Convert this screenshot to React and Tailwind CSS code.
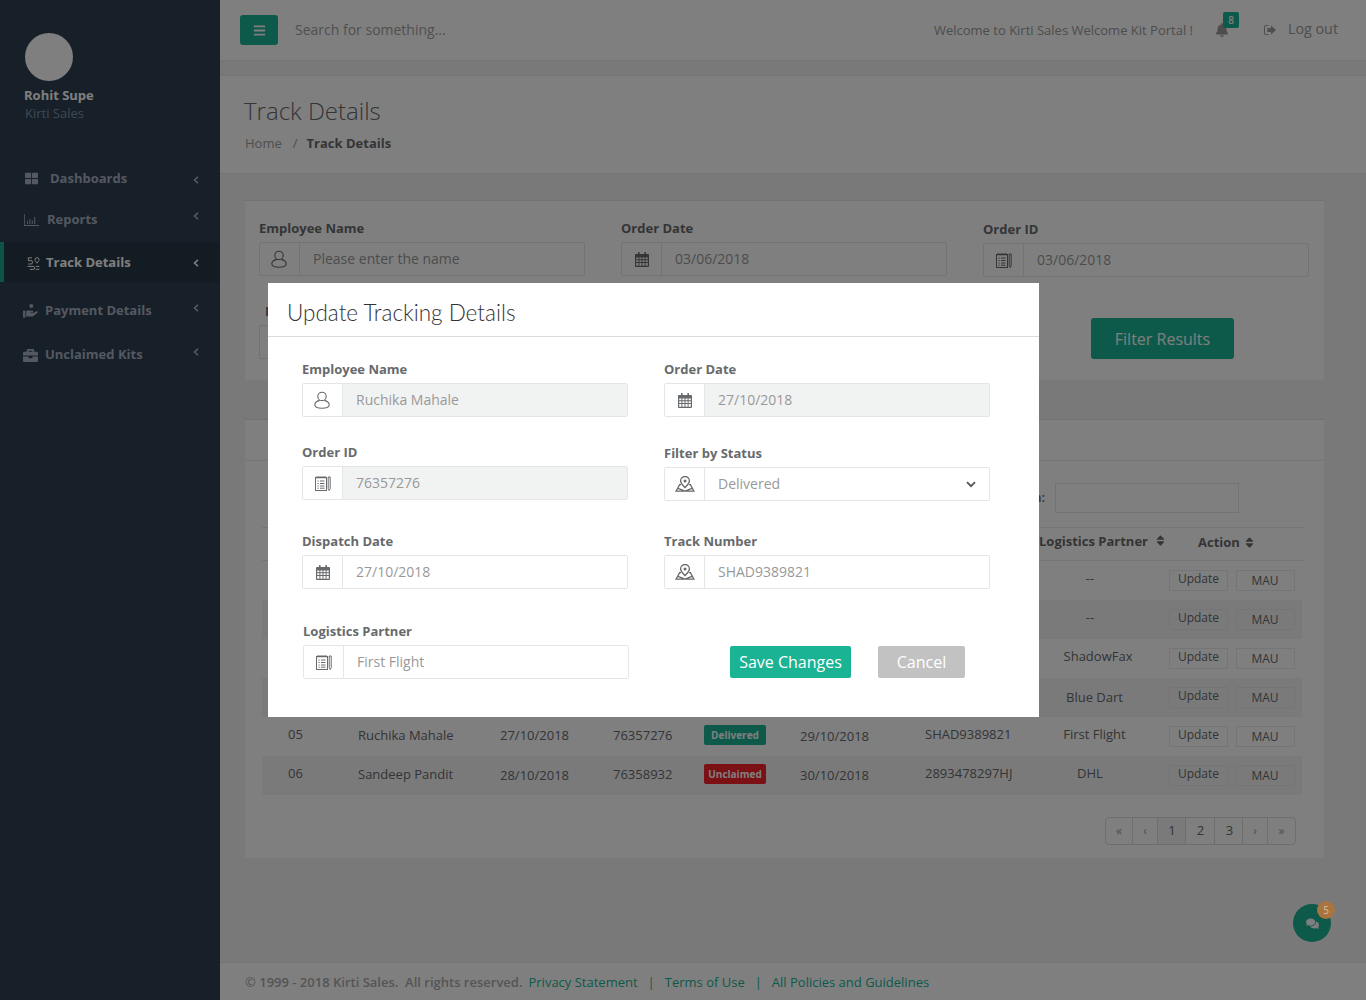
import React from "react";
import { FaBars, FaBell, FaBriefcase, FaComments, FaSort, FaThLarge } from "react-icons/fa";

const UserIcon = () => (
  <svg width="16" height="18" viewBox="0 0 16 18" fill="none" stroke="currentColor" strokeWidth="1.1" className="-ml-px">
    <circle cx="8" cy="5.4" r="4.2" />
    <path d="M5.8 9.4C2.8 10.2.8 11.7.8 13.7c0 2.1 2.4 3.5 7.2 3.5s7.2-1.4 7.2-3.5c0-2-2-3.5-5-4.3" />
  </svg>
);

const CalendarIcon = () => (
  <svg width="14" height="15" viewBox="0 0 14 15" fill="currentColor">
    <rect x="3" y="0" width="1.6" height="3.4" rx="0.6" />
    <rect x="9.4" y="0" width="1.6" height="3.4" rx="0.6" />
    <path
      fillRule="evenodd"
      d="M1 2h12a1 1 0 0 1 1 1v11a1 1 0 0 1-1 1H1a1 1 0 0 1-1-1V3a1 1 0 0 1 1-1zm.2 3.4v1.8h2.2V5.4zm3.2 0v1.8h2.1V5.4zm3.1 0v1.8h2.1V5.4zm3.1 0v1.8h2.2V5.4zm-9.4 2.8v1.9h2.2V8.2zm3.2 0v1.9h2.1V8.2zm3.1 0v1.9h2.1V8.2zm3.1 0v1.9h2.2V8.2zm-9.4 2.9v2.7h2.2v-2.7zm3.2 0v2.7h2.1v-2.7zm3.1 0v2.7h2.1v-2.7zm3.1 0v2.7h2.2v-2.7z"
    />
  </svg>
);

const NotesIcon = () => (
  <svg width="16" height="15" viewBox="0 0 16 15" fill="none" stroke="currentColor" strokeWidth="1">
    <rect x="0.5" y="1.5" width="11" height="13" />
    <path d="M2 0v2.5M4 0v2.5M6 0v2.5M8 0v2.5M10 0v2.5" />
    <path d="M2.5 5h1.2M5 5h4.5M2.5 7.5h1.2M5 7.5h4.5M2.5 10h1.2M5 10h4.5M2.5 12.2h1.2M5 12.2h4.5" />
    <path d="M13.2 1h2v11.5l-1 2-1-2z" />
  </svg>
);

const MapPinIcon = () => (
  <svg width="20" height="16" viewBox="0 0 20 16" fill="none" stroke="currentColor" strokeWidth="1.3">
    <path d="M10 11.6C7.6 8.8 5.6 7.2 5.6 4.9a4.4 4.4 0 0 1 8.8 0c0 2.3-2 3.9-4.4 6.7z" />
    <circle cx="10" cy="4.9" r="1.5" fill="currentColor" stroke="none" />
    <path d="M6 8.6H4.6L1 15.2h18l-3.6-6.6H14M3 12.4l7 2.6 7-2.6" />
  </svg>
);

const LeftChevron = () => (
  <svg width="6" height="8" viewBox="0 0 6 8" fill="none" stroke="currentColor" strokeWidth="1.6">
    <path d="M5 0.8 1.5 4 5 7.2" />
  </svg>
);

const ChartIcon = () => (
  <svg width="15" height="12" viewBox="0 0 15 12" fill="currentColor">
    <path d="M0 0h.8v11H15v1H0z" />
    <path d="M3 7h1v3H3zM5.4 5h1v5h-1zM7.8 6.4h1V10h-1zM10.2 3h1v7h-1z" />
  </svg>
);

const TrackIcon = () => (
  <svg width="13" height="13" viewBox="0 0 13 13" fill="none" stroke="currentColor" strokeWidth="1">
    <path d="M5 .8H1.3v2.8h2.6a1.6 1.6 0 0 1 0 3.4H1.3M.6 9.4h5.6a1.5 1.5 0 0 1 0 3H3" />
    <path d="M10 6.2C8.8 4.7 8 3.8 8 2.7a2 2 0 0 1 4 0c0 1.1-.8 2-2 3.5z" />
    <path d="M9 9.4h3.4M8.6 12.3h3.8" />
  </svg>
);

const HandIcon = () => (
  <svg width="15" height="14" viewBox="0 0 15 14" fill="currentColor">
    <circle cx="8.3" cy="2" r="2" />
    <rect x="0" y="6.6" width="2.4" height="7" />
    <path d="M3.2 7.2c1.6-1.2 3-1.2 4.4-.4h2c1 0 1 1.6 0 1.6H7.2v.5h3l3.3-1.6c1-.4 1.8.6 1 1.4l-4 3.2c-.6.5-1.1.6-2 .6H3.2z" />
  </svg>
);

const SignOutIcon = () => (
  <svg width="12" height="10" viewBox="0 0 12 10" fill="currentColor">
    <path d="M4.4 0H2C.8 0 0 .8 0 2v6c0 1.2.8 2 2 2h2.4V9H2c-.6 0-1-.4-1-1V2c0-.6.4-1 1-1h2.4z" />
    <path d="M7 .6 12 5 7 9.4V7H3.4V3H7z" />
  </svg>
);

const navItems = [
  { label: "Dashboards", icon: <FaThLarge size={13} />, row: "h-[41px] pl-[25px]", gap: "gap-[12px]", chevron: "mt-[2px]" },
  { label: "Reports", icon: <ChartIcon />, row: "h-[41px] pl-[24px]", gap: "gap-[8px]", chevron: "-mt-[7px]" },
  { label: "Payment Details", icon: <HandIcon />, row: "h-[44px] mt-[6px] pl-[23px] pt-[2px]", gap: "gap-[7px]", chevron: "-mt-[6px]" },
  { label: "Unclaimed Kits", icon: <FaBriefcase size={15} />, row: "h-[44px] pl-[23px] pt-[2px]", gap: "gap-[7px]", chevron: "-mt-[6px]" },
];

function NavRow({ item }) {
  return (
    <div className={`flex items-center pr-[21px] text-[#a7b1c2] ${item.row}`}>
      <div className={`flex flex-1 items-center text-[13px] font-bold ${item.gap}`}>
        {item.icon}
        <span>{item.label}</span>
      </div>
      <span className={item.chevron}>
        <LeftChevron />
      </span>
    </div>
  );
}

function Sidebar() {
  return (
    <aside className="flex w-[220px] shrink-0 flex-col bg-[#2f4050]">
      <div className="h-[158px] pl-[24px] pt-[33px]">
        <div className="ml-px h-[48px] w-[48px] rounded-full bg-white" />
        <div className="mt-[5px] text-[13px] font-bold leading-[18px] text-white">Rohit Supe</div>
        <div className="pl-px text-[13px] leading-[18px] text-[#7d92a8]">Kirti Sales</div>
      </div>
      <NavRow item={navItems[0]} />
      <NavRow item={navItems[1]} />
      <div className="mt-[2px] flex h-[40px] items-center border-l-4 border-[#19aa8d] bg-[#293846] pl-[23px] pr-[21px] pt-[2px] text-white">
        <div className="flex flex-1 items-center gap-[6px] text-[13px] font-bold">
          <TrackIcon />
          <span>Track Details</span>
        </div>
        <LeftChevron />
      </div>
      <NavRow item={navItems[2]} />
      <NavRow item={navItems[3]} />
    </aside>
  );
}

function TopBar() {
  return (
    <header className="flex h-[61px] shrink-0 items-center border-b border-[#e7eaec] bg-white pl-[20px] pr-[28px] text-[#676a6c]">
      <button className="flex h-[30px] w-[38px] items-center justify-center rounded-[3px] bg-[#1ab394] text-white">
        <FaBars size={13} />
      </button>
      <span className="ml-[17px] -mt-[2px] text-[14px] text-[#a0a0a0]">Search for something...</span>
      <span className="ml-auto mt-[2px] text-[13px] text-[#9a9a9a]">Welcome to Kirti Sales Welcome Kit Portal !</span>
      <div className="relative ml-[22px] text-[#9a9a9a]">
        <FaBell size={14} />
        <span className="absolute left-[8px] -top-[11px] flex h-[16px] w-[16px] items-center justify-center rounded-[2px] bg-[#1ab394] text-[10px] font-semibold text-white">
          8
        </span>
      </div>
      <span className="ml-[35px] text-[#999c9e]">
        <SignOutIcon />
      </span>
      <span className="ml-[12px] -mt-[2px] text-[14.3px] text-[#999c9e]">Log out</span>
    </header>
  );
}

function InputGroup({ icon, value, disabled, select }) {
  return (
    <div className="flex h-[34px] w-[326px] overflow-hidden rounded-[2px] border border-[#e5e6e7]">
      <div className="flex w-[40px] shrink-0 items-center justify-center border-r border-[#e5e6e7] bg-white text-[#676a6c]">
        {icon}
      </div>
      <div
        className={`flex flex-1 items-center pl-[13px] pr-[13px] text-[14px] text-[#999] ${
          disabled ? "bg-[#f1f2f2]" : "bg-white"
        }`}
      >
        <span className="-mt-[2px] flex-1">{value}</span>
        {select && (
          <svg width="10" height="7" viewBox="0 0 10 7" fill="none" stroke="#555" strokeWidth="1.8">
            <path d="M1 1.2 5 5.2 9 1.2" />
          </svg>
        )}
      </div>
    </div>
  );
}

function Field({ label, className = "", ...rest }) {
  return (
    <div className={className}>
      <div className="mb-[5px] text-[13px] font-bold leading-[18px] text-[#676a6c]">{label}</div>
      <InputGroup {...rest} />
    </div>
  );
}

function FilterCard() {
  return (
    <section className="h-[180px] border-t border-[#e0e2e4] bg-white px-[14px] pt-[18px]">
      <div className="flex gap-[36px]">
        <Field label="Employee Name" icon={<UserIcon />} value="Please enter the name" />
        <Field label="Order Date" icon={<CalendarIcon />} value="03/06/2018" />
        <Field label="Order ID" className="mt-px" icon={<NotesIcon />} value="03/06/2018" />
      </div>
      <div className="flex">
        <div className="mt-[25px] w-[326px]">
          <div className="mb-[5px] pl-[6px] text-[13px] font-bold leading-[18px] text-[#676a6c]">L</div>
          <div className="h-[34px] rounded-[2px] border border-[#e5e6e7]" />
        </div>
        <button className="ml-[506px] mt-[41px] h-[41px] w-[143px] rounded-[3px] bg-[#1ab394] text-[16px] text-white">
          Filter Results
        </button>
      </div>
    </section>
  );
}

// the first four rows sit behind the modal, only their partner and action cells show
const rows = [
  { id: "", partner: "--" },
  { id: "", partner: "--" },
  { id: "", partner: "ShadowFax", partnerCls: "ml-[16px] -mt-[3px]" },
  { id: "", partner: "Blue Dart", partnerCls: "ml-[9px] mt-[1px]" },
  { id: "05", name: "Ruchika Mahale", date: "27/10/2018", order: "76357276", status: "Delivered", dispatch: "29/10/2018", track: "SHAD9389821", partner: "First Flight", partnerCls: "ml-[9px] -mt-[3px]" },
  { id: "06", name: "Sandeep Pandit", date: "28/10/2018", order: "76358932", status: "Unclaimed", dispatch: "30/10/2018", track: "2893478297HJ", partner: "DHL" },
];

const tableCols = "grid grid-cols-[96px_142px_113px_91px_96px_125px_105px_120px_152px] items-center";

function TrackTable() {
  return (
    <div className="ml-[17px] mr-[22px] w-[1040px]">
      <div className={`${tableCols} h-[34px] w-[1042px] border-y border-[#e7eaec] text-[13px] font-bold text-[#676a6c]`}>
        <span className="col-start-8 ml-[9px] -mt-[5px] flex items-center whitespace-nowrap">
          Logistics Partner
          <FaSort size={13} className="ml-[6px] -mt-[2px] shrink-0" />
        </span>
        <span className="col-start-9 ml-[48px] -mt-[3px] flex items-center">
          Action
          <FaSort size={13} className="ml-[3px] -mt-[1px]" />
        </span>
      </div>
      {rows.map((row, i) => (
        <div
          key={i}
          className={`${tableCols} h-[39px] text-[13px] text-[#676a6c] ${i % 2 === 1 ? "bg-[#f5f5f6]" : ""}`}
        >
          <span className="pl-[26px] -mt-[3px]">{row.id}</span>
          <span className="-mt-[2px]">{row.name}</span>
          <span className={i === 4 ? "-mt-[2px]" : ""}>{row.date}</span>
          <span className="-mt-[2px]">{row.order}</span>
          {row.status ? (
            <span
              className={`-mt-[3px] flex h-[20px] w-[62px] items-center justify-center rounded-[2px] text-[10px] font-bold text-white ${
                row.status === "Delivered" ? "bg-[#1ab394]" : "bg-[#f7202a]"
              }`}
            >
              {row.status}
            </span>
          ) : (
            <span />
          )}
          <span className="mt-[1px]">{row.dispatch}</span>
          <span className="-mt-[3px]">{row.track}</span>
          <span className={`text-center ${row.partnerCls || "-mt-[3px]"}`}>{row.partner}</span>
          <div className="flex gap-[8px] pl-[19px]">
            <button className="flex h-[21px] w-[59px] items-start justify-center border border-[#e7eaec] text-[12px] leading-[16px] text-[#676a6c]">
              Update
            </button>
            <button className="flex h-[21px] w-[59px] items-center justify-center border border-[#e7eaec] pr-[1px] pt-[1px] text-[12px] text-[#676a6c]">
              MAU
            </button>
          </div>
        </div>
      ))}
    </div>
  );
}

function Pagination() {
  const cells = [
    { t: "«", w: "w-[27px]", cls: "text-[12px] text-[#999]" },
    { t: "‹", w: "w-[25px]", cls: "text-[12px] text-[#999]" },
    { t: "1", w: "w-[28px]", cls: "bg-[#f4f4f4] pl-[1px]" },
    { t: "2", w: "w-[29px]", cls: "pl-[1px]" },
    { t: "3", w: "w-[28px]", cls: "pl-[2px]" },
    { t: "›", w: "w-[25px]", cls: "text-[12px] text-[#999]" },
    { t: "»", w: "w-[27px]", cls: "text-[12px] text-[#999]" },
  ];
  return (
    <div className="ml-auto mr-[28px] mt-[22px] flex h-[28px] w-[191px] overflow-hidden rounded-[4px] border border-[#ddd] text-[13px] text-[#676a6c]">
      {cells.map((c) => (
        <span key={c.t} className={`flex items-center justify-center border-r border-[#ddd] last:border-r-0 ${c.w} ${c.cls}`}>
          {c.t}
        </span>
      ))}
    </div>
  );
}

function TableCard() {
  return (
    <section className="mt-[39px] h-[439px] border-t border-[#e0e2e4] bg-white">
      <div className="h-[41px] border-b border-[#e7eaec]" />
      <div className="flex h-[66px] justify-end pr-[85px] pt-[22px] text-[13px] font-semibold text-[#676a6c]">
        <span className="mr-[10px] mt-[5px]">Search:</span>
        <div className="h-[30px] w-[184px] border border-[#e5e6e7]" />
      </div>
      <TrackTable />
      <Pagination />
    </section>
  );
}

function Footer() {
  return (
    <footer className="mt-auto flex h-[38px] shrink-0 items-center whitespace-pre border-t border-[#e7eaec] bg-white pl-[25px] pt-[2px] text-[13px] text-[#aaa]">
      <span className="font-semibold">© 1999 - 2018 Kirti Sales.  All rights reserved.</span>
      <span className="ml-[6px] text-[#1ab394]">Privacy Statement</span>
      <span className="mx-[10px] text-[#1ab394]">|</span>
      <span className="text-[#1ab394]">Terms of Use</span>
      <span className="mx-[10px] text-[#1ab394]">|</span>
      <span className="text-[#1ab394]">All Policies and Guidelines</span>
    </footer>
  );
}

function UpdateModal() {
  return (
    <div className="absolute left-[268px] top-[283px] z-50 h-[434px] w-[771px] bg-white">
      <div className="flex h-[54px] items-center border-b border-[#dcdcdc] pl-[19px] pt-[6px] text-[22.5px] font-light text-[#333] [font-family:Lato,sans-serif]">
        Update Tracking Details
      </div>
      <div className="flex gap-[36px] pl-[34px] pt-[23px]">
        <div className="w-[326px]">
          <Field label="Employee Name" icon={<UserIcon />} value="Ruchika Mahale" disabled />
          <Field label="Order ID" className="mt-[26px]" icon={<NotesIcon />} value="76357276" disabled />
          <Field label="Dispatch Date" className="mt-[32px]" icon={<CalendarIcon />} value="27/10/2018" />
          <Field label="Logistics Partner" className="ml-px mt-[33px]" icon={<NotesIcon />} value="First Flight" />
        </div>
        <div className="w-[326px]">
          <Field label="Order Date" icon={<CalendarIcon />} value="27/10/2018" disabled />
          <Field label="Filter by Status" className="mt-[27px]" icon={<MapPinIcon />} value="Delivered" select />
          <Field label="Track Number" className="mt-[31px]" icon={<MapPinIcon />} value="SHAD9389821" />
          <div className="ml-[66px] mt-[57px] flex gap-[27px]">
            <button className="h-[32px] w-[121px] rounded-[2px] bg-[#1ab394] text-[16px] text-white">Save Changes</button>
            <button className="h-[32px] w-[87px] rounded-[2px] bg-[#c2c2c2] text-[16px] text-white">Cancel</button>
          </div>
        </div>
      </div>
    </div>
  );
}

export default function App() {
  return (
    <div className="relative flex h-screen overflow-hidden bg-[#2f4050] [font-family:'Open_Sans',sans-serif]">
      <Sidebar />
      <main className="flex min-w-0 flex-1 flex-col bg-[#f3f3f4]">
        <TopBar />
        <div className="mt-[14px] h-[99px] shrink-0 border-y border-[#e7eaec] bg-white pl-[24px] pt-[20px]">
          <h1 className="text-[24px] font-light leading-[30px] text-[#676a6c]">Track Details</h1>
          <div className="mt-[7px] pl-px text-[13px] leading-[20px] text-[#999c9e]">
            Home<span className="ml-[11px] mr-[9px]">/</span>
            <strong className="font-bold text-[#676a6c]">Track Details</strong>
          </div>
        </div>
        <div className="mt-[26px] pl-[25px] pr-[42px]">
          <FilterCard />
          <TableCard />
        </div>
        <Footer />
      </main>

      {/* floating chat button */}
      <div className="absolute left-[1293px] top-[904px] flex h-[38px] w-[38px] items-center justify-center rounded-full bg-[#1ab394] text-white">
        <FaComments size={13} />
      </div>

      <div className="absolute inset-0 z-40 bg-black/50" />
      <span className="absolute left-[1317px] top-[901px] z-50 flex h-[18px] w-[18px] items-center justify-center rounded-full bg-[#a8743f] text-[10px] text-[#d8c2a8]">
        5
      </span>
      <UpdateModal />
    </div>
  );
}
